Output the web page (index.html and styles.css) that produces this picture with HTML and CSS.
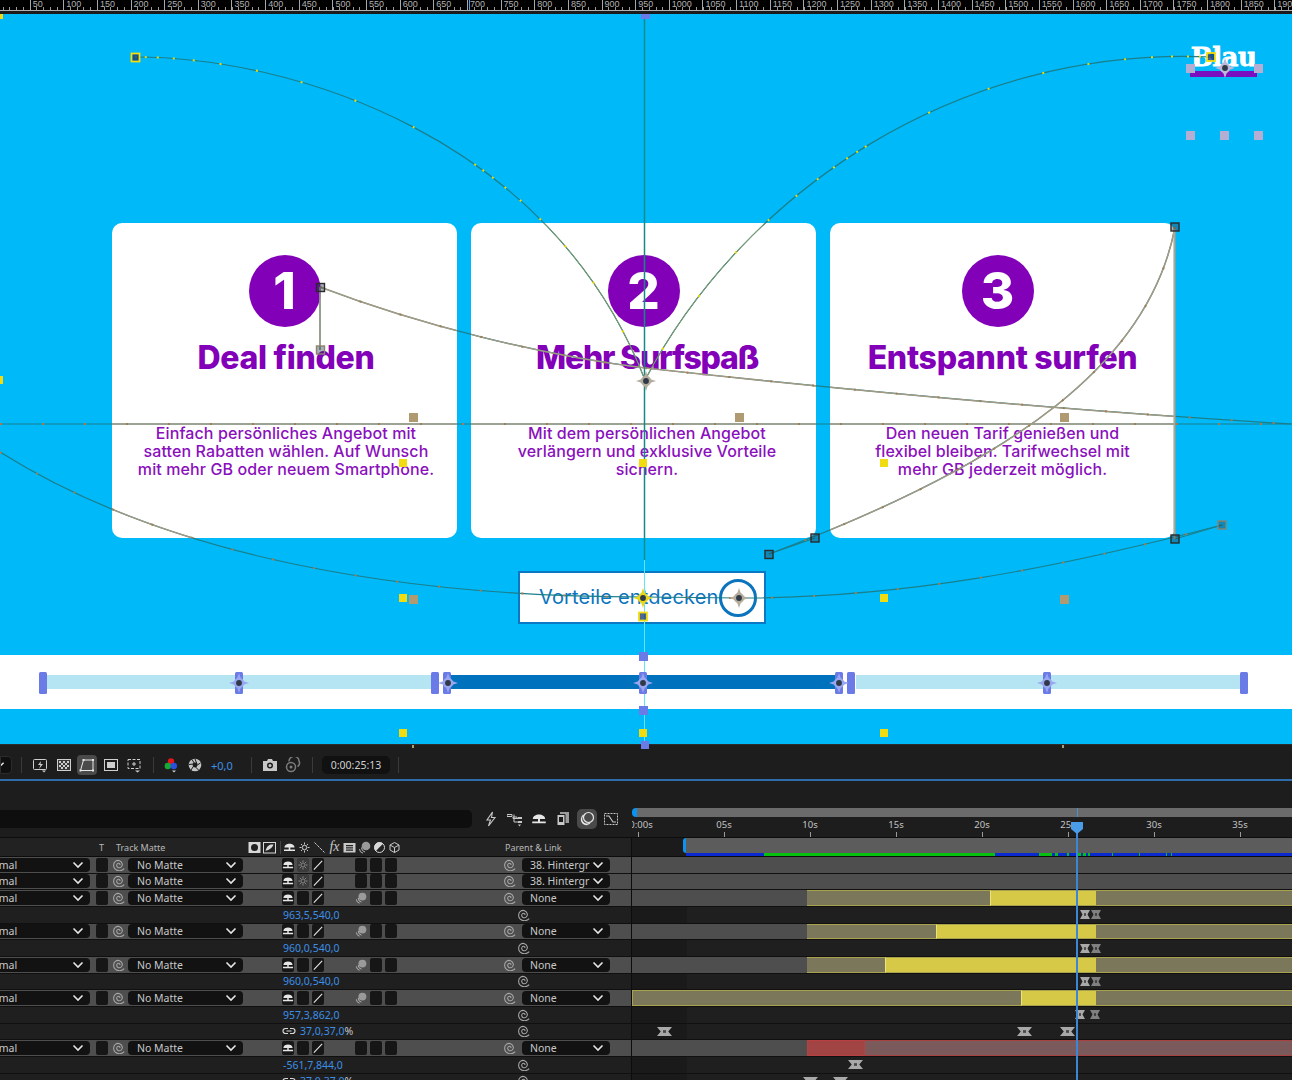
FILE: index.html
```html
<!DOCTYPE html>
<html lang="de">
<head>
    <meta charset="UTF-8">
    <title>Blau - Timeline</title>
    <link rel="stylesheet" href="styles.css">
</head>
<body>

    <!-- Shared icons -->
    <svg class="defs" aria-hidden="true">
        <defs>
            <symbol id="chev" viewBox="0 0 12 8"><path d="M1.500 1.500L6 6l4.500-4.500" fill="none" stroke="#e6e6e6" stroke-width="1.600"/></symbol>
            <symbol id="spiral" viewBox="1 2 9 9"><path d="M6 6.500c.6-.8-.4-1.700-1.400-1.200-1.300.7-1 2.800.4 3.200 1.900.5 3.400-1.300 2.900-3.100C7.300 3.200 4.800 2.400 3 3.600 1 5 1 8 2.700 9.600c1.900 1.700 5 1.500 6.700-.3" fill="none" stroke="#a8a8a8" stroke-width=".8"/></symbol>
            <symbol id="shy" viewBox="0 0 13 13"><path d="M1.500 6.500C1.500 1.500 11.500 1.500 11.500 6.500ZM5.700 6.500h1.600v3.500H5.700ZM1 8.500h11V10H1Z" fill="#e6e6e6"/></symbol>
            <symbol id="sun" viewBox="0 0 13 13"><circle cx="6.500" cy="6.500" r="2.200" fill="none" stroke="#8a8a8a"/><path d="M6.500 1.500v2M6.500 9.500v2M1.500 6.500h2M9.500 6.500h2M3 3l1.400 1.400M8.600 8.600L10 10M10 3L8.600 4.400M4.400 8.600L3 10" stroke="#8a8a8a"/></symbol>
            <symbol id="slash" viewBox="0 0 13 13"><path d="M2 11.500L11 2" stroke="#e6e6e6" stroke-width="1.200"/></symbol>
            <symbol id="blur" viewBox="0 0 13 13"><circle cx="8" cy="5" r="4.300" fill="#9a9a9a"/><path d="M3.500 6.500a4.500 4.500 0 0 0 3.500 4.500M1.500 8a4.500 4.500 0 0 0 3.500 4.200" fill="none" stroke="#b8b8b8"/></symbol>
            <symbol id="link" viewBox="0 0 14 8"><path d="M6 1.500H3.500a2.500 2.500 0 0 0 0 5H6M8 1.500h2.500a2.500 2.500 0 0 1 0 5H8M4.500 4h5" fill="none" stroke="#d8d8d8" stroke-width="1.200"/></symbol>
            <symbol id="kf" viewBox="0 0 10 10" preserveAspectRatio="none"><path d="M0 0H10L7.500 5L10 10H0L2.500 5Z" fill="#a9a9a9"/><rect x="4" y="3.500" width="2" height="3" fill="#4a4a4a"/></symbol>
            <symbol id="anchor" viewBox="-13 -13 26 26"><path d="M0-13L2-7 7-2 13 0 7 2 2 7 0 13-2 7-7 2-13 0-7-2-2-7Z" fill="currentColor"/><circle r="6.500" fill="currentColor"/><circle r="3.800" fill="#2f3a48"/></symbol>
        </defs>
    </svg>

    <!-- Ruler -->
    <div class="ruler">
        <div class="ruler-marks">
            <span></span><span>50</span><span>100</span><span>150</span><span>200</span><span>250</span><span>300</span><span>350</span><span>400</span><span>450</span>
            <span>500</span><span>550</span><span>600</span><span>650</span><span>700</span><span>750</span><span>800</span><span>850</span><span>900</span><span>950</span>
            <span>1000</span><span>1050</span><span>1100</span><span>1150</span><span>1200</span><span>1250</span><span>1300</span><span>1350</span><span>1400</span><span>1450</span>
            <span>1500</span><span>1550</span><span>1600</span><span>1650</span><span>1700</span><span>1750</span><span>1800</span><span>1850</span><span>1900</span>
        </div>
        <i class="ruler-cursor"></i>
    </div>

    <!-- Composition viewer -->
    <div class="stage">
        <div class="logo">
            <span class="logo-word">Blau</span>
        </div>

        <div class="cards">
            <div class="card card-1">
                <div class="badge">1</div>
                <h2>Deal finden</h2>
                <p>Einfach persönliches Angebot mit<br>satten Rabatten wählen. Auf Wunsch<br>mit mehr GB oder neuem Smartphone.</p>
            </div>
            <div class="card card-2">
                <div class="badge">2</div>
                <h2>Mehr Surfspaß</h2>
                <p>Mit dem persönlichen Angebot<br>verlängern und exklusive Vorteile<br>sichern.</p>
            </div>
            <div class="card card-3">
                <div class="badge">3</div>
                <h2>Entspannt surfen</h2>
                <p>Den neuen Tarif genießen und<br>flexibel bleiben. Tarifwechsel mit<br>mehr GB jederzeit möglich.</p>
            </div>
        </div>

        <div class="cta">
            <span>Vorteile entdecken</span>
            <i class="cta-ring"></i>
        </div>

        <div class="band">
            <div class="bar"></div>
            <div class="bar bar-on"></div>
            <div class="bar"></div>
        </div>

        <!-- Motion paths and handles over the comp -->
        <svg class="paths" viewBox="0 14 1292 731" aria-hidden="true">
            <defs>
                <clipPath id="white-areas">
                    <rect x="112" y="223" width="345" height="315" rx="10"/>
                    <rect x="471" y="223" width="345" height="315" rx="10"/>
                    <rect x="830" y="223" width="345" height="315" rx="10"/>
                </clipPath>
                <path id="p-left" d="M135 57C290 57 550 135 645 380"/>
                <path id="p-right" d="M1211 57C960 46 745 190 645 380"/>
                <path id="p-a" d="M320 287C420 325 540 355 645 368"/>
                <path id="p-b" d="M645 368C800 385 1050 410 1292 424"/>
                <path id="p-c" d="M1175 227C1150 360 1020 460 769 554"/>
                <path id="p-d" d="M0 452C140 540 350 597 645 597"/>
                <path id="p-e" d="M645 597L740 598C900 598 1050 570 1222 525"/>
                <path id="p-h" d="M0 424H1292"/>
                <path id="p-v" d="M1174.500 227V539"/>
                <path id="p-s" d="M320 287V350M769 554L815 538M1175 539L1222 525"/>
            </defs>

            <g class="line-blue">
                <use href="#p-left"/><use href="#p-right"/><use href="#p-a"/><use href="#p-b"/><use href="#p-c"/>
                <use href="#p-d"/><use href="#p-e"/><use href="#p-h"/><use href="#p-v"/><use href="#p-s"/>
            </g>
            <g class="line-white" clip-path="url(#white-areas)">
                <use href="#p-a"/><use href="#p-b"/><use href="#p-c"/><use href="#p-d"/><use href="#p-h"/><use href="#p-s"/>
                <use class="line-olive" href="#p-left"/><use class="line-olive" href="#p-right"/>
            </g>
            <path class="line-tan" d="M1174.500 227V539"/>

            <path class="line-teal" d="M644.500 14V560"/>
            <path class="line-cyan" d="M644.500 560V745"/>

            <g class="dots dots-yellow">
                <use href="#p-left"/><use href="#p-right"/>
            </g>
            <g class="dots dots-tan">
                <use href="#p-a"/><use href="#p-b"/><use href="#p-c"/><use href="#p-d"/><use href="#p-e"/><use href="#p-h"/>
            </g>

            <!-- solid layer points -->
            <g class="pt-yellow">
                <rect x="399" y="594" width="8" height="8"/><rect x="399" y="459" width="8" height="8"/>
                <rect x="639" y="459" width="8" height="8"/><rect x="880" y="459" width="8" height="8"/>
                <rect x="880" y="594" width="8" height="8"/><rect x="399" y="729" width="8" height="8"/>
                <rect x="639" y="729" width="8" height="8"/><rect x="880" y="729" width="8" height="8"/>
                <rect x="-4" y="376" width="7" height="8"/><rect x="-4" y="11" width="7" height="8"/>
            </g>
            <g class="pt-tan">
                <rect x="409" y="413" width="9" height="9"/><rect x="735" y="413" width="9" height="9"/>
                <rect x="1060" y="413" width="9" height="9"/><rect x="409" y="595" width="9" height="9"/>
                <rect x="1060" y="595" width="9" height="9"/><rect x="412" y="745" width="2" height="3"/>
                <rect x="1062" y="745" width="2" height="3"/>
            </g>
            <g class="pt-lilac">
                <rect x="1186" y="131" width="9" height="9"/><rect x="1220" y="131" width="9" height="9"/>
                <rect x="1254" y="131" width="9" height="9"/><rect x="1186" y="64" width="9" height="9"/>
                <rect x="1254" y="64" width="9" height="9"/>
            </g>
            <g class="pt-blue">
                <rect x="641" y="11" width="9" height="8"/><rect x="639" y="652" width="9" height="9"/>
                <rect x="639" y="706" width="9" height="9"/><rect x="641" y="741" width="8" height="8"/>
                <rect x="39" y="672" width="8" height="22" rx="1.500"/><rect x="235" y="672" width="8" height="22" rx="1.500"/>
                <rect x="431" y="672" width="8" height="22" rx="1.500"/><rect x="443" y="672" width="8" height="22" rx="1.500"/>
                <rect x="639" y="672" width="8" height="22" rx="1.500"/><rect x="835" y="672" width="8" height="22" rx="1.500"/>
                <rect x="847" y="672" width="8" height="22" rx="1.500"/><rect x="1043" y="672" width="8" height="22" rx="1.500"/>
                <rect x="1240" y="672" width="8" height="22" rx="1.500"/>
            </g>

            <!-- hollow bezier vertices -->
            <g class="vt-yellow">
                <rect x="131.500" y="53.500" width="8" height="8"/><rect x="1207" y="53" width="8" height="8"/>
                <rect x="639" y="612.500" width="8" height="8"/>
            </g>
            <g class="vt-dark">
                <rect x="316.500" y="283.500" width="8" height="8"/><rect x="1171" y="223" width="8" height="8"/>
                <rect x="1171" y="535" width="8" height="8"/><rect x="811" y="534" width="8" height="8"/>
                <rect x="765" y="550.500" width="8" height="8"/>
            </g>
            <g class="vt-gray">
                <rect x="316.500" y="346" width="8" height="8"/><rect x="1218" y="521" width="8" height="8"/>
            </g>

            <!-- anchor points -->
            <use class="an-gray" href="#anchor" x="636" y="371" width="20" height="20"/>
            <use class="an-gray" href="#anchor" x="729" y="588" width="20" height="20"/>
            <use class="an-yellow" href="#anchor" x="633" y="588" width="20" height="20"/>
            <use class="an-lilac" href="#anchor" x="1215" y="58" width="20" height="20"/>
            <use class="an-blue" href="#anchor" x="229" y="673" width="20" height="20"/>
            <use class="an-blue" href="#anchor" x="438" y="673" width="20" height="20"/>
            <use class="an-blue" href="#anchor" x="633" y="673" width="20" height="20"/>
            <use class="an-blue" href="#anchor" x="829" y="673" width="20" height="20"/>
            <use class="an-blue" href="#anchor" x="1037" y="673" width="20" height="20"/>
        </svg>
    </div>

    <!-- Viewer toolbar -->
    <div class="toolbar">
        <span class="tb-select"><svg class="tb-chev"><use href="#chev"/></svg></span>
        <i class="tb-sep ml9"></i>
        <svg class="tb-icon ml10" viewBox="0 0 16 16"><rect x="1.500" y="2.500" width="13" height="10" rx="1" fill="none" stroke="#cfcfcf"/><path d="M9 4L6 8h2.500L7 12l4-5H8.500Z" fill="#cfcfcf"/><path d="M10 13.500h4l-2 2Z" fill="#cfcfcf"/></svg>
        <svg class="tb-icon ml8" viewBox="0 0 16 16"><rect x="1.500" y="2.500" width="13" height="11" fill="#3a3a3a" stroke="#cfcfcf"/><path d="M3 4h2v2H3ZM7 4h2v2H7ZM11 4h2v2h-2ZM5 6h2v2H5ZM9 6h2v2H9ZM3 8h2v2H3ZM7 8h2v2H7ZM11 8h2v2h-2ZM5 10h2v2H5ZM9 10h2v2H9Z" fill="#cfcfcf"/></svg>
        <span class="tb-active ml5"><svg class="tb-icon" viewBox="0 0 16 16"><path d="M4.500 3H14V13.500H1.500Z" fill="none" stroke="#e6e6e6"/><path d="M3.500 2h2v2h-2ZM13 2h2v2h-2ZM.5 12.500h2v2h-2ZM13 12.500h2v2h-2Z" fill="#e6e6e6"/></svg></span>
        <svg class="tb-icon ml6" viewBox="0 0 16 16"><rect x="1.500" y="2.500" width="13" height="11" fill="none" stroke="#cfcfcf"/><rect x="4" y="5" width="8" height="6" fill="#cfcfcf"/></svg>
        <svg class="tb-icon ml7" viewBox="0 0 16 16"><path d="M2 2.500h12v9H2Z" fill="none" stroke="#cfcfcf" stroke-dasharray="3 1.500"/><path d="M8 5v4M6 7h4" stroke="#cfcfcf"/><path d="M9 13.500h5l-2.500 2Z" fill="#cfcfcf"/></svg>
        <i class="tb-sep ml11"></i>
        <svg class="tb-icon ml9" viewBox="0 0 16 16"><circle cx="8" cy="4.500" r="3.200" fill="#e01818"/><circle cx="4.800" cy="9" r="3.200" fill="#18a838"/><circle cx="10.800" cy="9" r="3.200" fill="#2a50e0"/><path d="M9 13.500h4l-2 2Z" fill="#cfcfcf"/></svg>
        <svg class="tb-icon ml8" viewBox="0 0 16 16"><circle cx="8" cy="8" r="6.300" fill="#c4c4c4"/><circle cx="8" cy="8" r="2.400" fill="#1d1d1d"/><path d="M8 2L10 7M13.500 6L9.500 8.500M11.500 13L8 9.500M4 13L7 8.500M2 7.500L6.500 7M5 2.500L7.500 6.500" stroke="#1d1d1d"/></svg>
        <span class="tb-exposure ml8">+0,0</span>
        <i class="tb-sep ml20"></i>
        <svg class="tb-icon ml10" viewBox="0 0 16 16"><path d="M1 4h4l1-2h4l1 2h4v10H1Z" fill="#c8c8c8"/><circle cx="8" cy="8.500" r="3" fill="#1d1d1d"/><circle cx="8" cy="8.500" r="1.500" fill="#c8c8c8"/></svg>
        <svg class="tb-icon ml7" viewBox="0 0 16 16"><circle cx="6" cy="10" r="4.500" fill="none" stroke="#7c7c7c" stroke-width="1.500"/><circle cx="6" cy="10" r="1.500" fill="#7c7c7c"/><path d="M4 4.500A5 5 0 0 1 14 4a4 4 0 0 1-1.500 5.500" fill="none" stroke="#7c7c7c" stroke-width="1.500"/></svg>
        <i class="tb-sep ml11"></i>
        <span class="tb-time ml9">0:00:25:13</span>
        <i class="tb-sep ml8"></i>
    </div>

    <!-- Timeline panel -->
    <div class="timeline">
        <div class="controls">
            <div class="controls-left">
                <div class="search"></div>
                <svg class="ct-icon" viewBox="0 0 16 16"><path d="M9.500 1L4 9h3.500L5.500 15 12 6.500H8.500Z" fill="none" stroke="#c8c8c8" stroke-width="1.100"/></svg>
                <svg class="ct-icon" viewBox="0 0 16 16"><path d="M0 3.500h5v2H0ZM6 6h4v1.500H6ZM7 3.500V11h4M7 7.500h4" fill="none" stroke="#c8c8c8"/><path d="M11 6h4v2h-4ZM11 10h4v2h-4ZM11 13.500h3l-1.500 2Z" fill="#c8c8c8"/></svg>
                <svg class="ct-icon" viewBox="0 0 16 16"><use href="#shy"/></svg>
                <svg class="ct-icon" viewBox="0 0 16 16"><path d="M5 1h9v11H5Z" fill="#9c9c9c"/><path d="M2 3.500h8v11H2Z" fill="#c8c8c8" stroke="#1d1d1d"/><path d="M4 6h4v5H4Z" fill="#1d1d1d"/></svg>
                <span class="ct-active"><svg class="ct-icon" viewBox="0 0 16 16"><circle cx="9.500" cy="6.500" r="5" fill="none" stroke="#e6e6e6" stroke-width="1.200"/><path d="M2.500 7.500a5 5 0 0 0 6 6M4.500 4a5 5 0 0 0 6.500 8" fill="none" stroke="#e6e6e6" stroke-width="1.200"/></svg></span>
                <svg class="ct-icon" viewBox="0 0 16 16"><rect x="1.500" y="2.500" width="13" height="11" fill="none" stroke="#c8c8c8" stroke-dasharray="2 1"/><path d="M3 5h3l4 6h3" fill="none" stroke="#c8c8c8" stroke-width="1.200"/></svg>
            </div>
            <div class="controls-right">
                <div class="nav-bar"><i class="nav-cap"></i><i class="nav-fill"></i></div>
                <div class="time-labels">
                    <span>0:00s</span><span>05s</span><span>10s</span><span>15s</span><span>20s</span><span>25s</span><span>30s</span><span>35s</span>
                </div>
            </div>
        </div>

        <!-- Column header -->
        <div class="row-head">
            <div class="cols cols-head">
                <span class="h-t">T</span>
                <span class="h-matte">Track Matte</span>
                <span class="h-icons">
                    <svg class="hi" viewBox="0 0 13 13"><rect x=".5" y="1" width="12" height="11" fill="#d8d8d8"/><circle cx="6.500" cy="6.500" r="3.500" fill="#222"/></svg>
                    <svg class="hi" viewBox="0 0 13 13"><rect x=".5" y="1.500" width="12" height="10.500" fill="none" stroke="#d8d8d8"/><path d="M2.500 10C5 9 9 8 10.500 3.500 7 3 4 4 2.500 10Z" fill="#d8d8d8"/></svg>
                    <i class="hi-gap"></i>
                    <svg class="hi" viewBox="0 0 13 13"><use href="#shy"/></svg>
                    <svg class="hi" viewBox="0 0 13 13"><circle cx="6.500" cy="6.500" r="2.200" fill="none" stroke="#c8c8c8"/><path d="M6.500 1.500v2M6.500 9.500v2M1.500 6.500h2M9.500 6.500h2M3 3l1.400 1.400M8.600 8.600L10 10M10 3L8.600 4.400M4.400 8.600L3 10" stroke="#c8c8c8"/></svg>
                    <svg class="hi" viewBox="0 0 13 13"><path d="M1.500 1.500L11.500 11.500" stroke="#c8c8c8" stroke-dasharray="3 1"/></svg>
                    <span class="h-fx">fx</span>
                    <svg class="hi" viewBox="0 0 13 13"><path d="M.5 2h12v9.500H.5Z" fill="#c8c8c8"/><path d="M3 4h7v1.300H3ZM3 6.200h7v1.300H3ZM3 8.400h7v1.300H3Z" fill="#222"/></svg>
                    <svg class="hi" viewBox="0 0 13 13"><use href="#blur"/></svg>
                    <svg class="hi" viewBox="0 0 13 13"><circle cx="6.500" cy="6.500" r="5" fill="none" stroke="#d8d8d8"/><path d="M2.800 10A5 5 0 0 1 10 2.800Z" fill="#d8d8d8"/></svg>
                    <svg class="hi" viewBox="0 0 13 13"><path d="M6.500 1.500l4.500 2.500v5l-4.500 2.500L2 9V4ZM2 4l4.500 2.500L11 4M6.500 6.500v5" fill="none" stroke="#c8c8c8"/></svg>
                </span>
                <span class="h-parent">Parent &amp; Link</span>
            </div>
            <div class="track-head">
                <i class="work-cap"></i>
                <div class="work-area">
                    <div class="work-fill"></div>
                    <div class="work-stripe">
                        <i class="st-b st-78"></i><i class="st-g st-231"></i><i class="st-b st-44"></i><i class="st-g st-13"></i><i class="st-b st-3"></i><i class="st-g st-3"></i><i class="st-b st-9"></i><i class="st-g st-2"></i><i class="st-b st-9"></i><i class="st-g st-3"></i><i class="st-b st-2"></i><i class="st-g st-3"></i><i class="st-b st-2"></i><i class="st-g st-2"></i><i class="st-b st-22"></i><i class="st-g st-1"></i><i class="st-b st-26"></i><i class="st-g st-1"></i><i class="st-b st-26"></i><i class="st-g st-1"></i><i class="st-b st-4"></i><i class="st-g st-1"></i><i class="st-b st-130"></i>
                    </div>
                </div>
            </div>
        </div>

        <!-- Layers -->
        <div class="row layer">
            <div class="cols">
                <span class="sel sel-mode">Normal<svg><use href="#chev"/></svg></span><i class="sw sw-t"></i><svg class="spiral sp-matte"><use href="#spiral"/></svg><span class="sel sel-matte">No Matte<svg><use href="#chev"/></svg></span>
                <span class="sw sw-first"><svg><use href="#shy"/></svg></span><span class="sw sw-sun"><svg><use href="#sun"/></svg></span><span class="sw"><svg><use href="#slash"/></svg></span><i class="sw sw-group"></i><i class="sw"></i><i class="sw"></i>
                <svg class="spiral sp-parent"><use href="#spiral"/></svg><span class="sel sel-parent">38. Hintergr<svg><use href="#chev"/></svg></span>
            </div>
            <div class="track"></div>
        </div>
        <div class="row layer">
            <div class="cols">
                <span class="sel sel-mode">Normal<svg><use href="#chev"/></svg></span><i class="sw sw-t"></i><svg class="spiral sp-matte"><use href="#spiral"/></svg><span class="sel sel-matte">No Matte<svg><use href="#chev"/></svg></span>
                <span class="sw sw-first"><svg><use href="#shy"/></svg></span><span class="sw sw-sun"><svg><use href="#sun"/></svg></span><span class="sw"><svg><use href="#slash"/></svg></span><i class="sw sw-group"></i><i class="sw"></i><i class="sw"></i>
                <svg class="spiral sp-parent"><use href="#spiral"/></svg><span class="sel sel-parent">38. Hintergr<svg><use href="#chev"/></svg></span>
            </div>
            <div class="track"></div>
        </div>
        <div class="row layer">
            <div class="cols">
                <span class="sel sel-mode">Normal<svg><use href="#chev"/></svg></span><i class="sw sw-t"></i><svg class="spiral sp-matte"><use href="#spiral"/></svg><span class="sel sel-matte">No Matte<svg><use href="#chev"/></svg></span>
                <span class="sw sw-first"><svg><use href="#shy"/></svg></span><i class="sw"></i><span class="sw"><svg><use href="#slash"/></svg></span><span class="sw sw-group sw-clear"><svg><use href="#blur"/></svg></span><i class="sw"></i><i class="sw"></i>
                <svg class="spiral sp-parent"><use href="#spiral"/></svg><span class="sel sel-parent">None<svg><use href="#chev"/></svg></span>
            </div>
            <div class="track">
                <i class="gap" style="width:175px"></i><i class="clip" style="width:183px"></i><i class="clip clip-on" style="width:106px"></i><i class="clip clip-rest"></i>
            </div>
        </div>
        <div class="row prop">
            <div class="cols">
                <span class="value">963,5,540,0</span><svg class="spiral"><use href="#spiral"/></svg>
            </div>
            <div class="track">
                <i class="gap" style="width:448px"></i><svg class="kf"><use href="#kf"/></svg><i class="gap" style="width:1px"></i><svg class="kf kf-dim"><use href="#kf"/></svg>
            </div>
        </div>
        <div class="row layer">
            <div class="cols">
                <span class="sel sel-mode">Normal<svg><use href="#chev"/></svg></span><i class="sw sw-t"></i><svg class="spiral sp-matte"><use href="#spiral"/></svg><span class="sel sel-matte">No Matte<svg><use href="#chev"/></svg></span>
                <span class="sw sw-first"><svg><use href="#shy"/></svg></span><i class="sw"></i><span class="sw"><svg><use href="#slash"/></svg></span><span class="sw sw-group sw-clear"><svg><use href="#blur"/></svg></span><i class="sw"></i><i class="sw"></i>
                <svg class="spiral sp-parent"><use href="#spiral"/></svg><span class="sel sel-parent">None<svg><use href="#chev"/></svg></span>
            </div>
            <div class="track">
                <i class="gap" style="width:175px"></i><i class="clip" style="width:129px"></i><i class="clip clip-on" style="width:160px"></i><i class="clip clip-rest"></i>
            </div>
        </div>
        <div class="row prop">
            <div class="cols">
                <span class="value">960,0,540,0</span><svg class="spiral"><use href="#spiral"/></svg>
            </div>
            <div class="track">
                <i class="gap" style="width:448px"></i><svg class="kf"><use href="#kf"/></svg><i class="gap" style="width:1px"></i><svg class="kf kf-dim"><use href="#kf"/></svg>
            </div>
        </div>
        <div class="row layer">
            <div class="cols">
                <span class="sel sel-mode">Normal<svg><use href="#chev"/></svg></span><i class="sw sw-t"></i><svg class="spiral sp-matte"><use href="#spiral"/></svg><span class="sel sel-matte">No Matte<svg><use href="#chev"/></svg></span>
                <span class="sw sw-first"><svg><use href="#shy"/></svg></span><i class="sw"></i><span class="sw"><svg><use href="#slash"/></svg></span><span class="sw sw-group sw-clear"><svg><use href="#blur"/></svg></span><i class="sw"></i><i class="sw"></i>
                <svg class="spiral sp-parent"><use href="#spiral"/></svg><span class="sel sel-parent">None<svg><use href="#chev"/></svg></span>
            </div>
            <div class="track">
                <i class="gap" style="width:175px"></i><i class="clip" style="width:78px"></i><i class="clip clip-on" style="width:211px"></i><i class="clip clip-rest"></i>
            </div>
        </div>
        <div class="row prop">
            <div class="cols">
                <span class="value">960,0,540,0</span><svg class="spiral"><use href="#spiral"/></svg>
            </div>
            <div class="track">
                <i class="gap" style="width:448px"></i><svg class="kf"><use href="#kf"/></svg><i class="gap" style="width:1px"></i><svg class="kf kf-dim"><use href="#kf"/></svg>
            </div>
        </div>
        <div class="row layer">
            <div class="cols">
                <span class="sel sel-mode">Normal<svg><use href="#chev"/></svg></span><i class="sw sw-t"></i><svg class="spiral sp-matte"><use href="#spiral"/></svg><span class="sel sel-matte">No Matte<svg><use href="#chev"/></svg></span>
                <span class="sw sw-first"><svg><use href="#shy"/></svg></span><i class="sw"></i><span class="sw"><svg><use href="#slash"/></svg></span><span class="sw sw-group sw-clear"><svg><use href="#blur"/></svg></span><i class="sw"></i><i class="sw"></i>
                <svg class="spiral sp-parent"><use href="#spiral"/></svg><span class="sel sel-parent">None<svg><use href="#chev"/></svg></span>
            </div>
            <div class="track">
                <i class="clip" style="width:389px"></i><i class="clip clip-on" style="width:75px"></i><i class="clip clip-rest"></i>
            </div>
        </div>
        <div class="row prop">
            <div class="cols">
                <span class="value">957,3,862,0</span><svg class="spiral"><use href="#spiral"/></svg>
            </div>
            <div class="track">
                <i class="gap" style="width:443px"></i><svg class="kf"><use href="#kf"/></svg><i class="gap" style="width:5px"></i><svg class="kf kf-dim"><use href="#kf"/></svg>
            </div>
        </div>
        <div class="row prop">
            <div class="cols">
                <svg class="link"><use href="#link"/></svg><span class="value value-link">37,0,37,0<em>%</em></span><svg class="spiral"><use href="#spiral"/></svg>
            </div>
            <div class="track">
                <i class="gap" style="width:25px"></i><svg class="kf kf-wide"><use href="#kf"/></svg><i class="gap" style="width:345px"></i><svg class="kf kf-wide"><use href="#kf"/></svg><i class="gap" style="width:28px"></i><svg class="kf kf-wide"><use href="#kf"/></svg>
            </div>
        </div>
        <div class="row layer">
            <div class="cols">
                <span class="sel sel-mode">Normal<svg><use href="#chev"/></svg></span><i class="sw sw-t"></i><svg class="spiral sp-matte"><use href="#spiral"/></svg><span class="sel sel-matte">No Matte<svg><use href="#chev"/></svg></span>
                <span class="sw sw-first"><svg><use href="#shy"/></svg></span><i class="sw"></i><span class="sw"><svg><use href="#slash"/></svg></span><i class="sw sw-group"></i><i class="sw"></i><i class="sw"></i>
                <svg class="spiral sp-parent"><use href="#spiral"/></svg><span class="sel sel-parent">None<svg><use href="#chev"/></svg></span>
            </div>
            <div class="track">
                <i class="gap" style="width:175px"></i><i class="clip clip-red" style="width:58px"></i><i class="clip clip-red-rest"></i>
            </div>
        </div>
        <div class="row prop">
            <div class="cols">
                <span class="value">-561,7,844,0</span><svg class="spiral"><use href="#spiral"/></svg>
            </div>
            <div class="track">
                <i class="gap" style="width:216px"></i><svg class="kf kf-wide"><use href="#kf"/></svg>
            </div>
        </div>
        <div class="row prop">
            <div class="cols">
                <svg class="link"><use href="#link"/></svg><span class="value value-link">37,0,37,0<em>%</em></span><svg class="spiral"><use href="#spiral"/></svg>
            </div>
            <div class="track">
                <i class="gap" style="width:171px"></i><svg class="kf kf-wide"><use href="#kf"/></svg><i class="gap" style="width:15px"></i><svg class="kf kf-wide"><use href="#kf"/></svg>
            </div>
        </div>

        <!-- Playhead -->
        <div class="playhead">
            <svg class="playhead-top" viewBox="0 0 12 12"><path d="M0 0H12V7L6 12 0 7Z" fill="#4a9be8"/></svg>
        </div>
    </div>

</body>
</html>
```

FILE: styles.css
```css
* {
    box-sizing: border-box;
}
html, body {
    margin: 0;
    padding: 0;
}
body {
    width: 1292px;
    height: 1080px;
    overflow: hidden;
    background-color: #1d1d1d;
    font-family: "Noto Sans", sans-serif;
    color: #c8c8c8;
}
.defs {
    position: absolute;
    width: 0;
    height: 0;
}

/* Ruler */
.ruler {
    height: 14px;
    background-color: #1b1b1b;
    overflow: hidden;
    position: relative;
    z-index: 2;
}
.ruler-marks {
    display: flex;
    height: 11px;
    margin-left: -4px;
    width: 1320px;
    background-color: #000;
    border-bottom: 1px solid #b0b0b0;
    background-image: repeating-linear-gradient(90deg, #9a9a9a 0, #9a9a9a 1px, transparent 1px, transparent 6.73px);
    background-size: 100% 3px;
    background-position: 0 100%;
    background-repeat: no-repeat;
}
.ruler-marks span {
    flex: 0 0 33.65px;
    padding-left: 2px;
    border-left: 1px solid #a8a8a8;
    font-size: 9px;
    line-height: 8px;
    color: #b0b0b0;
    font-family: "Liberation Sans", sans-serif;
}
.ruler-cursor {
    position: absolute;
    left: 469px;
    top: 0;
    width: 1px;
    height: 10px;
    background-color: #4a9be8;
}

/* Stage */
.stage {
    position: relative;
    height: 730px;
    padding-top: 33px;
    background-color: #00b9f9;
    display: flex;
    flex-direction: column;
}
.logo {
    height: 30px;
    padding-right: 35px;
    display: flex;
    justify-content: flex-end;
}
.logo-word {
    width: 67px;
    height: 30px;
    border-bottom: 6px solid #7a0fc0;
    color: #fff;
    font-family: "DejaVu Serif", serif;
    font-weight: bold;
    font-size: 26px;
    line-height: 21px;
    letter-spacing: -0.5px;
    text-align: center;
    -webkit-text-stroke: 0.8px #fff;
}
.cards {
    display: flex;
    gap: 14px;
    margin-top: 146px;
    padding-left: 112px;
}
.card {
    width: 345px;
    height: 315px;
    background: #fff;
    border-radius: 10px;
    padding-top: 32px;
    color: #8200b8;
    text-align: center;
}
.badge {
    width: 72px;
    height: 72px;
    margin: 0 auto;
    border-radius: 50%;
    background-color: #8200b8;
    color: #fff;
    font-family: Inter, sans-serif;
    font-weight: 800;
    font-size: 51px;
    line-height: 72px;
}
.card h2 {
    margin: 12px 0 0 0;
    font-family: Inter, sans-serif;
    font-weight: 800;
    font-size: 32px;
    line-height: 38px;
    letter-spacing: -0.3px;
}
.card p {
    margin: 47px 0 0 0;
    font-family: Inter, sans-serif;
    font-weight: 500;
    font-size: 16px;
    line-height: 18px;
    letter-spacing: 0.1px;
    color: #8a10bc;
}
.card-1 h2, .card-1 p {
    padding-left: 3px;
}
.card-2 h2, .card-2 p {
    padding-left: 7px;
}
.card-2 h2 {
    letter-spacing: -1.2px;
}
.card-3 .badge {
    transform: translateX(-5px);
}

/* Call to action */
.cta {
    width: 248px;
    height: 53px;
    margin: 33px 0 0 518px;
    padding: 0 7px 2px 19px;
    background-color: #fff;
    border: 2px solid #0b78c4;
    color: #0b74bd;
    font-family: Inter, sans-serif;
    font-size: 20px;
    letter-spacing: 0.15px;
    display: flex;
    align-items: center;
    justify-content: space-between;
}
.cta-ring {
    width: 38px;
    height: 38px;
    margin-bottom: -2px;
    border: 3px solid #0b74bd;
    border-radius: 50%;
}

/* Progress band */
.band {
    height: 54px;
    margin-top: 31px;
    padding: 0 52px 0 47px;
    background-color: #fff;
    display: flex;
    align-items: center;
    gap: 20px;
}
.bar {
    flex: 1;
    height: 14px;
    background-color: #b5e5f3;
}
.bar-on {
    background-color: #0071bc;
}

/* Motion paths */
.paths {
    position: absolute;
    left: 0;
    top: 0;
    width: 1292px;
    height: 731px;
    overflow: visible;
    pointer-events: none;
    z-index: 1;
}
.paths use, .paths path {
    fill: none;
}
.line-blue {
    stroke: #1a7f8a;
    stroke-width: 1.2;
}
.line-white {
    stroke: #a39a84;
    stroke-width: 1.5;
}
.line-olive {
    stroke: #8f9a5c;
    stroke-width: 1;
}
.line-tan {
    stroke: #b5a58c;
    stroke-width: 2;
}
.line-teal {
    stroke: #148a86;
    stroke-width: 1.5;
}
.line-cyan {
    stroke: #5fe6f2;
    stroke-width: 1;
}
.dots {
    stroke-width: 2;
}
.dots-yellow {
    stroke: #ecd90e;
    stroke-dasharray: 2 8 2 10 2 14 2 18 2 25 2 35 2 44 2 55 2 62 2 70;
}
.dots-tan {
    stroke: #a07f55;
    stroke-dasharray: 2 40;
}
.pt-yellow {
    fill: #f0dc10;
}
.pt-tan {
    fill: #b09a72;
}
.pt-lilac {
    fill: #b4aed2;
}
.pt-blue {
    fill: #6a7ae6;
}
.vt-yellow rect, .vt-dark rect, .vt-gray rect {
    fill: rgba(40, 60, 80, 0.4);
    stroke-width: 1.4;
}
.vt-yellow rect {
    fill: rgba(20, 50, 110, 0.75);
    stroke: #f2de10;
    stroke-width: 1.8;
}
.vt-dark {
    stroke: #2a2a2a;
}
.vt-gray {
    stroke: #8c8270;
}
.an-gray {
    color: #b5ad9c;
}
.an-yellow {
    color: #e6d81c;
}
.an-lilac {
    color: #bcb8da;
}
.an-blue {
    color: #9aa6f0;
}

/* Toolbar */
.toolbar {
    height: 37px;
    padding-top: 6px;
    border-top: 1px solid #2c2c2c;
    border-bottom: 2px solid #2f6cab;
    background-color: #1d1d1d;
    display: flex;
    align-items: center;
}
.ml5 { margin-left: 5px; }
.ml6 { margin-left: 6px; }
.ml7 { margin-left: 7px; }
.ml8 { margin-left: 8px; }
.ml9 { margin-left: 9px; }
.ml10 { margin-left: 10px; }
.ml11 { margin-left: 11px; }
.ml20 { margin-left: 20px; }
.tb-select {
    flex: none;
    width: 12px;
    height: 18px;
    background-color: #0f0f0f;
    border-radius: 0 4px 4px 0;
    border: 1px solid #2c2c2c;
    overflow: hidden;
    display: flex;
    align-items: center;
}
.tb-chev {
    flex: none;
    width: 11px;
    height: 8px;
    margin-left: -7px;
}
.tb-sep {
    flex: none;
    width: 1px;
    height: 16px;
    background-color: #3a3a3a;
}
.tb-icon {
    flex: none;
    width: 16px;
    height: 16px;
}
.tb-active {
    flex: none;
    width: 20px;
    height: 20px;
    background-color: #4a4a4a;
    border-radius: 4px;
    display: flex;
    align-items: center;
    justify-content: center;
}
.tb-exposure {
    flex: none;
    width: 20px;
    font-size: 11px;
    color: #3d8fe6;
    white-space: nowrap;
}
.tb-time {
    flex: none;
    width: 68px;
    height: 18px;
    background-color: #111;
    border-radius: 5px;
    font-size: 10.5px;
    line-height: 18px;
    text-align: center;
    color: #d0d0d0;
}

/* Timeline */
.timeline {
    position: relative;
}
.controls {
    display: flex;
    height: 57px;
    border-bottom: 1px solid #0c0c0c;
}
.controls-left {
    width: 632px;
    padding-top: 29px;
    display: flex;
    align-items: flex-start;
}
.search {
    width: 472px;
    height: 18px;
    margin-right: 11px;
    background-color: #0e0e0e;
    border-radius: 0 5px 5px 0;
}
.ct-icon {
    flex: none;
    width: 16px;
    height: 16px;
    margin-right: 8px;
    margin-top: 1px;
}
.ct-active {
    flex: none;
    width: 20px;
    height: 20px;
    margin: -1px 6px 0 -2px;
    background-color: #4a4a4a;
    border-radius: 5px;
    display: flex;
    align-items: center;
    justify-content: center;
}
.ct-active .ct-icon {
    margin: 0;
}
.controls-right {
    flex: 1;
    overflow: hidden;
    padding-top: 27px;
}
.nav-bar {
    display: flex;
    height: 9px;
}
.nav-cap {
    width: 5px;
    background-color: #0a94ef;
    border-radius: 4px 0 0 4px;
}
.nav-fill {
    flex: 1;
    background: linear-gradient(#4a8fd0, #4a8fd0) 440px 0 / 1px 100% no-repeat, #6b6b6b;
}
.time-labels {
    display: flex;
    margin-left: -37px;
}
.time-labels span {
    flex: 0 0 86px;
    height: 20px;
    padding-top: 1px;
    font-size: 9.500px;
    line-height: 13px;
    text-align: center;
    color: #c4c4c4;
    background: linear-gradient(#9a9a9a, #9a9a9a) 50% 15px / 1px 5px no-repeat;
}
.time-labels span:first-child {
    padding-left: 6px;
}

/* Column header */
.row-head {
    display: flex;
    height: 19px;
    border-bottom: 1px solid #0c0c0c;
}
.cols {
    flex: none;
    width: 632px;
    display: flex;
    align-items: center;
    border-right: 1px solid #0c0c0c;
    overflow: hidden;
}
.cols-head {
    background-color: #222;
    font-size: 9px;
    color: #b8b8b8;
}
.h-t {
    margin-left: 99px;
    width: 17px;
}
.h-matte {
    width: 132px;
}
.h-icons {
    display: flex;
    align-items: center;
    gap: 2px;
    width: 257px;
}
.hi {
    flex: none;
    width: 13px;
    height: 13px;
}
.hi-gap {
    flex: none;
    width: 3px;
    height: 13px;
    border-right: 1px solid #444;
}
.h-fx {
    flex: none;
    width: 13px;
    font-family: "Liberation Serif", serif;
    font-style: italic;
    font-size: 14px;
    color: #c8c8c8;
    text-align: center;
}
.h-parent {
    white-space: nowrap;
}
.track-head {
    flex: 1;
    display: flex;
    padding-left: 51px;
    background-color: #1b1b1b;
}
.work-cap {
    flex: none;
    width: 3px;
    background-color: #0a94ef;
    border-radius: 3px 0 0 3px;
    height: 15px;
}
.work-area {
    flex: 1;
    display: flex;
    flex-direction: column;
    min-width: 0;
}
.work-fill {
    height: 15px;
    background-color: #5c5c5c;
}
.work-stripe {
    height: 3px;
    display: flex;
}
.work-stripe i {
    flex: none;
}
.st-b { background-color: #0a2ad0; }
.st-g { background-color: #06c010; }
.st-1 { width: 1px; }
.st-2 { width: 2px; }
.st-3 { width: 3px; }
.st-4 { width: 4px; }
.st-9 { width: 9px; }
.st-13 { width: 13px; }
.st-22 { width: 22px; }
.st-26 { width: 26px; }
.st-44 { width: 44px; }
.st-78 { width: 78px; }
.st-130 { width: 130px; }
.st-231 { width: 231px; }

/* Rows */
.row {
    display: flex;
    height: 16.67px;
    border-bottom: 1px solid #101010;
    font-size: 10.500px;
}
.layer {
    background-color: #4e4e4e;
}
.prop {
    background-color: #1f1f1f;
}
.track {
    flex: 1;
    display: flex;
    align-items: center;
    overflow: hidden;
    min-width: 0;
}
.prop .track {
    background: linear-gradient(90deg, #1a1a1a 55px, transparent 55px);
}
.layer .track {
    align-items: stretch;
}
.gap {
    flex: none;
}
.clip {
    flex: none;
    background-color: #7a775a;
    border-top: 1px solid #a8a24e;
    border-bottom: 1px solid #a8a24e;
}
.clip:first-of-type {
    border-left: 1px solid #a8a24e;
}
.clip-on {
    background-color: #d6c948;
    border-left: 1px solid #eee27a;
}
.clip-rest {
    flex: 1;
}
.clip-red {
    background-color: #a34444;
    border: 1px solid #b84040;
}
.clip-red-rest {
    flex: 1;
    background-color: #7a5a5a;
    border-top: 1px solid #a84040;
    border-bottom: 1px solid #a84040;
}
.kf {
    flex: none;
    width: 10px;
    height: 9px;
}
.kf-wide {
    width: 15px;
}
.kf-dim {
    opacity: 0.7;
}

.sel {
    flex: none;
    height: 14px;
    padding-left: 9px;
    background-color: #121212;
    border-radius: 4px;
    color: #c8c8c8;
    line-height: 14px;
    white-space: nowrap;
    display: flex;
    justify-content: space-between;
    align-items: center;
    overflow: hidden;
}
.sel svg {
    flex: none;
    width: 12px;
    height: 8px;
    margin-right: 6px;
}
.sel-mode {
    width: 90px;
    padding-left: 0;
    text-indent: -20px;
    border-radius: 0 4px 4px 0;
}
.sel-matte {
    width: 115px;
    margin-left: 3px;
}
.sel-parent {
    width: 88px;
    margin-left: 6px;
    padding-left: 8px;
}
.sw {
    flex: none;
    width: 12px;
    height: 14px;
    margin-left: 3px;
    background-color: #161616;
    border-radius: 2px;
    display: flex;
    align-items: center;
    justify-content: center;
}
.sw svg {
    width: 12px;
    height: 12px;
}
.sw-t {
    margin-left: 6px;
}
.sw-first {
    margin-left: 39px;
}
.sw-sun {
    background-color: #3a3a3a;
}
.sw-group {
    margin-left: 31px;
}
.sw-clear {
    background-color: transparent;
}
.spiral {
    flex: none;
    width: 12px;
    height: 12px;
}
.sp-matte {
    margin-left: 5px;
}
.sp-parent {
    margin-left: 107px;
}
.value {
    flex: none;
    width: 235px;
    margin-left: 283px;
    color: #3d8fe6;
}
.value em {
    font-style: normal;
    color: #c8c8c8;
}
.link {
    flex: none;
    width: 14px;
    height: 8px;
    margin-left: 282px;
}
.value-link {
    width: 218px;
    margin-left: 4px;
}

/* Playhead */
.playhead {
    position: absolute;
    left: 1076px;
    top: 41px;
    width: 2px;
    height: 262px;
    background-color: #3b86d6;
}
.playhead-top {
    position: absolute;
    left: -5px;
    top: 0;
    width: 12px;
    height: 12px;
}
```
